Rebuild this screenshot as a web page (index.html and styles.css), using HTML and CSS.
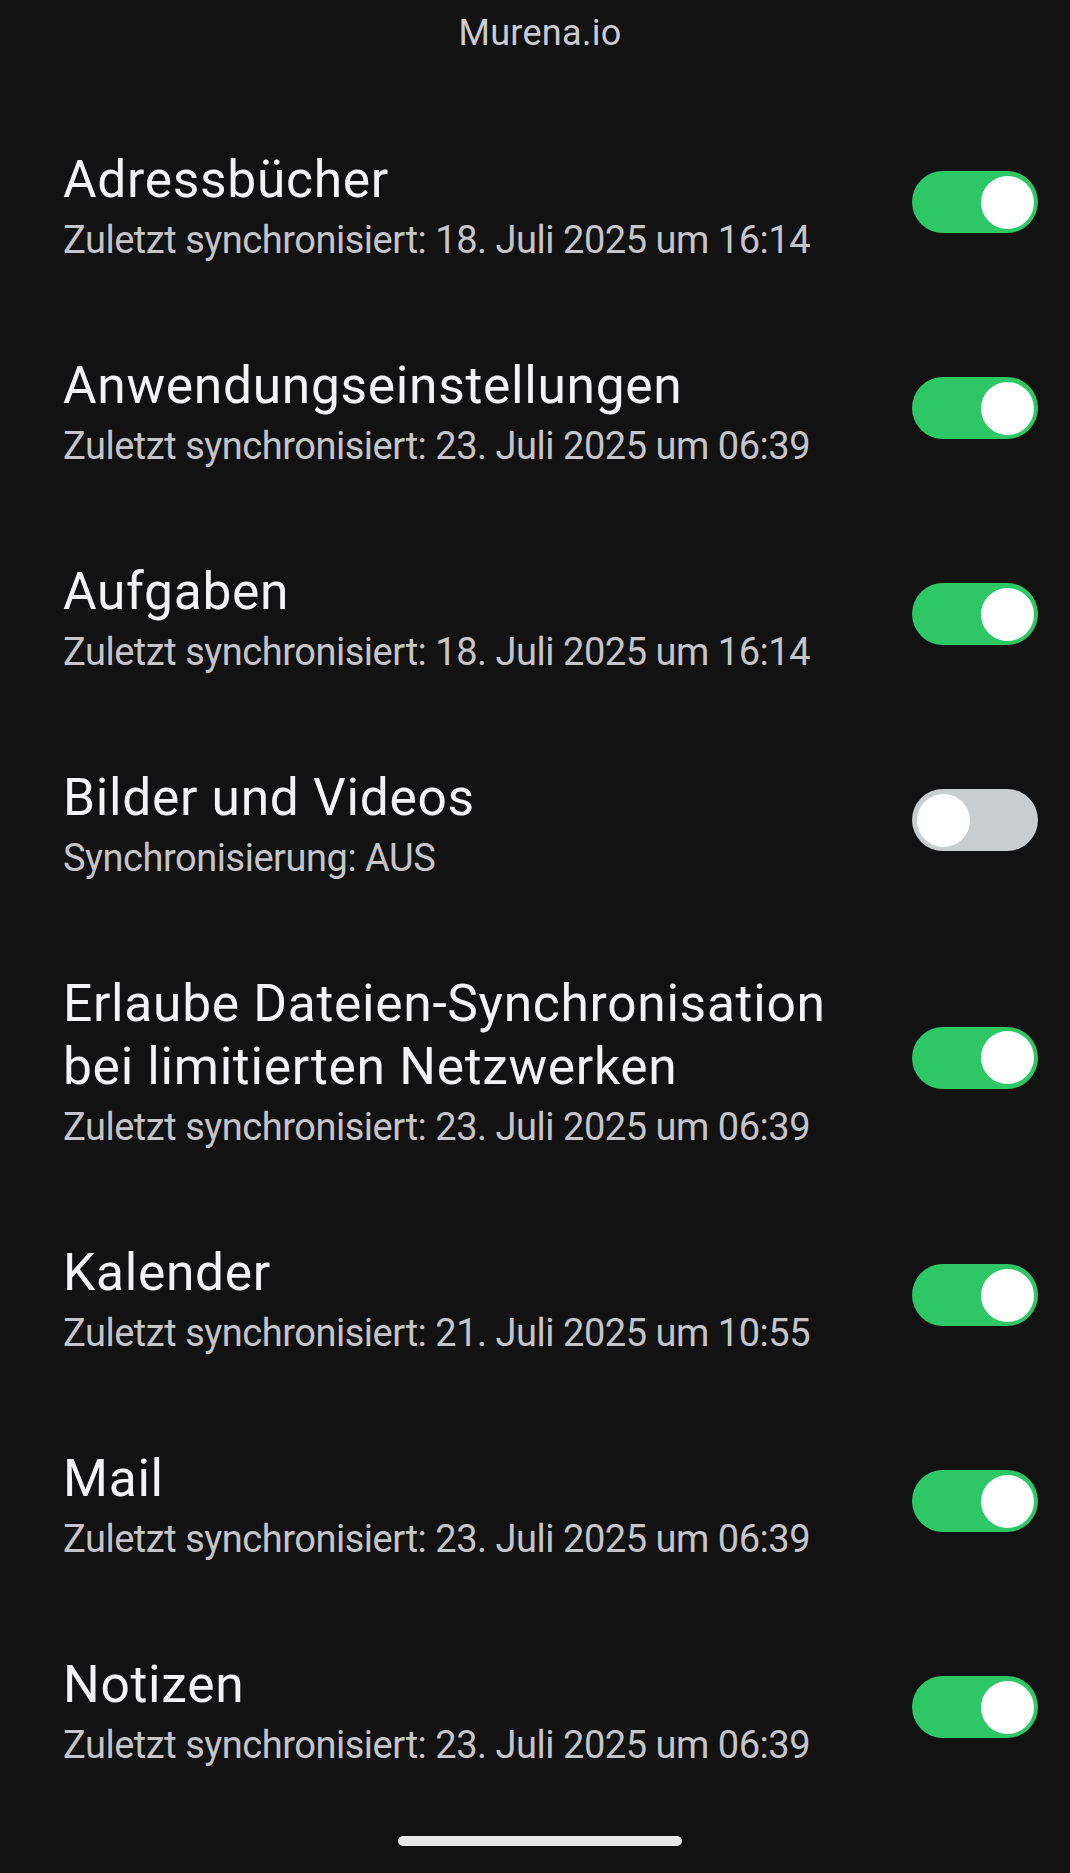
FILE: index.html
```html
<!DOCTYPE html>
<html lang="de">
<head>
<meta charset="utf-8">
<title>Murena.io</title>
<link rel="stylesheet" href="styles.css">
</head>
<body>
<div class="screen">
  <header class="header">Murena.io</header>
  <main class="list">
    <div class="row">
      <div class="text">
        <div class="title">Adressbücher</div>
        <div class="summary">Zuletzt synchronisiert: 18. Juli 2025 um 16:14</div>
      </div>
      <div class="switch on"><span class="knob"></span></div>
    </div>
    <div class="row">
      <div class="text">
        <div class="title">Anwendungseinstellungen</div>
        <div class="summary">Zuletzt synchronisiert: 23. Juli 2025 um 06:39</div>
      </div>
      <div class="switch on"><span class="knob"></span></div>
    </div>
    <div class="row">
      <div class="text">
        <div class="title">Aufgaben</div>
        <div class="summary">Zuletzt synchronisiert: 18. Juli 2025 um 16:14</div>
      </div>
      <div class="switch on"><span class="knob"></span></div>
    </div>
    <div class="row">
      <div class="text">
        <div class="title">Bilder und Videos</div>
        <div class="summary">Synchronisierung: AUS</div>
      </div>
      <div class="switch off"><span class="knob"></span></div>
    </div>
    <div class="row">
      <div class="text">
        <div class="title">Erlaube Dateien-Synchronisation bei limitierten Netzwerken</div>
        <div class="summary">Zuletzt synchronisiert: 23. Juli 2025 um 06:39</div>
      </div>
      <div class="switch on"><span class="knob"></span></div>
    </div>
    <div class="row">
      <div class="text">
        <div class="title">Kalender</div>
        <div class="summary">Zuletzt synchronisiert: 21. Juli 2025 um 10:55</div>
      </div>
      <div class="switch on"><span class="knob"></span></div>
    </div>
    <div class="row">
      <div class="text">
        <div class="title">Mail</div>
        <div class="summary">Zuletzt synchronisiert: 23. Juli 2025 um 06:39</div>
      </div>
      <div class="switch on"><span class="knob"></span></div>
    </div>
    <div class="row">
      <div class="text">
        <div class="title">Notizen</div>
        <div class="summary">Zuletzt synchronisiert: 23. Juli 2025 um 06:39</div>
      </div>
      <div class="switch on"><span class="knob"></span></div>
    </div>
  </main>
  <footer class="footer"><span class="handle"></span></footer>
</div>
</body>
</html>
```

FILE: styles.css
```css
html, body {
  margin: 0;
  padding: 0;
  background: #121212;
}

body {
  font-family: Roboto, "Noto Sans", "Liberation Sans", sans-serif;
  overflow: hidden;
}

.screen {
  width: 1070px;
  height: 1873px;
  display: flex;
  flex-direction: column;
  background: #121212;
}

.header {
  height: 103px;
  box-sizing: border-box;
  padding: 1px 0 0 10px;
  font-size: 36px;
  letter-spacing: 0.3px;
  line-height: 64px;
  color: #cacad0;
  text-align: center;
}

.list {
  display: flex;
  flex-direction: column;
}

.row {
  display: flex;
  align-items: center;
  gap: 40px;
  padding: 44.5px 32px 44.5px 63px;
}

.text {
  flex: 1;
  min-width: 0;
}

.title {
  font-size: 51.5px;
  letter-spacing: 0.7px;
  line-height: 63px;
  color: #f3f3f5;
}

.summary {
  margin-top: 4px;
  font-size: 38px;
  letter-spacing: -0.47px;
  line-height: 50px;
  color: #c4c4c9;
}

.switch {
  flex: none;
  width: 126px;
  height: 62px;
  border-radius: 31px;
  box-sizing: border-box;
  display: flex;
  align-items: center;
  padding: 0 4px;
  margin-bottom: 8px;
}

.switch.on {
  background: #2dc766;
  justify-content: flex-end;
}

.switch.off {
  background: #c9cdcf;
  justify-content: flex-start;
  padding: 0 5px;
}

.knob {
  width: 53px;
  height: 53px;
  border-radius: 50%;
  background: #ffffff;
}

.footer {
  flex: 1;
  display: flex;
  justify-content: center;
  align-items: flex-start;
  padding: 22px 0 0 10px;
}

.handle {
  display: block;
  width: 284px;
  height: 10px;
  border-radius: 5px;
  background: #e8e8e8;
}
```
